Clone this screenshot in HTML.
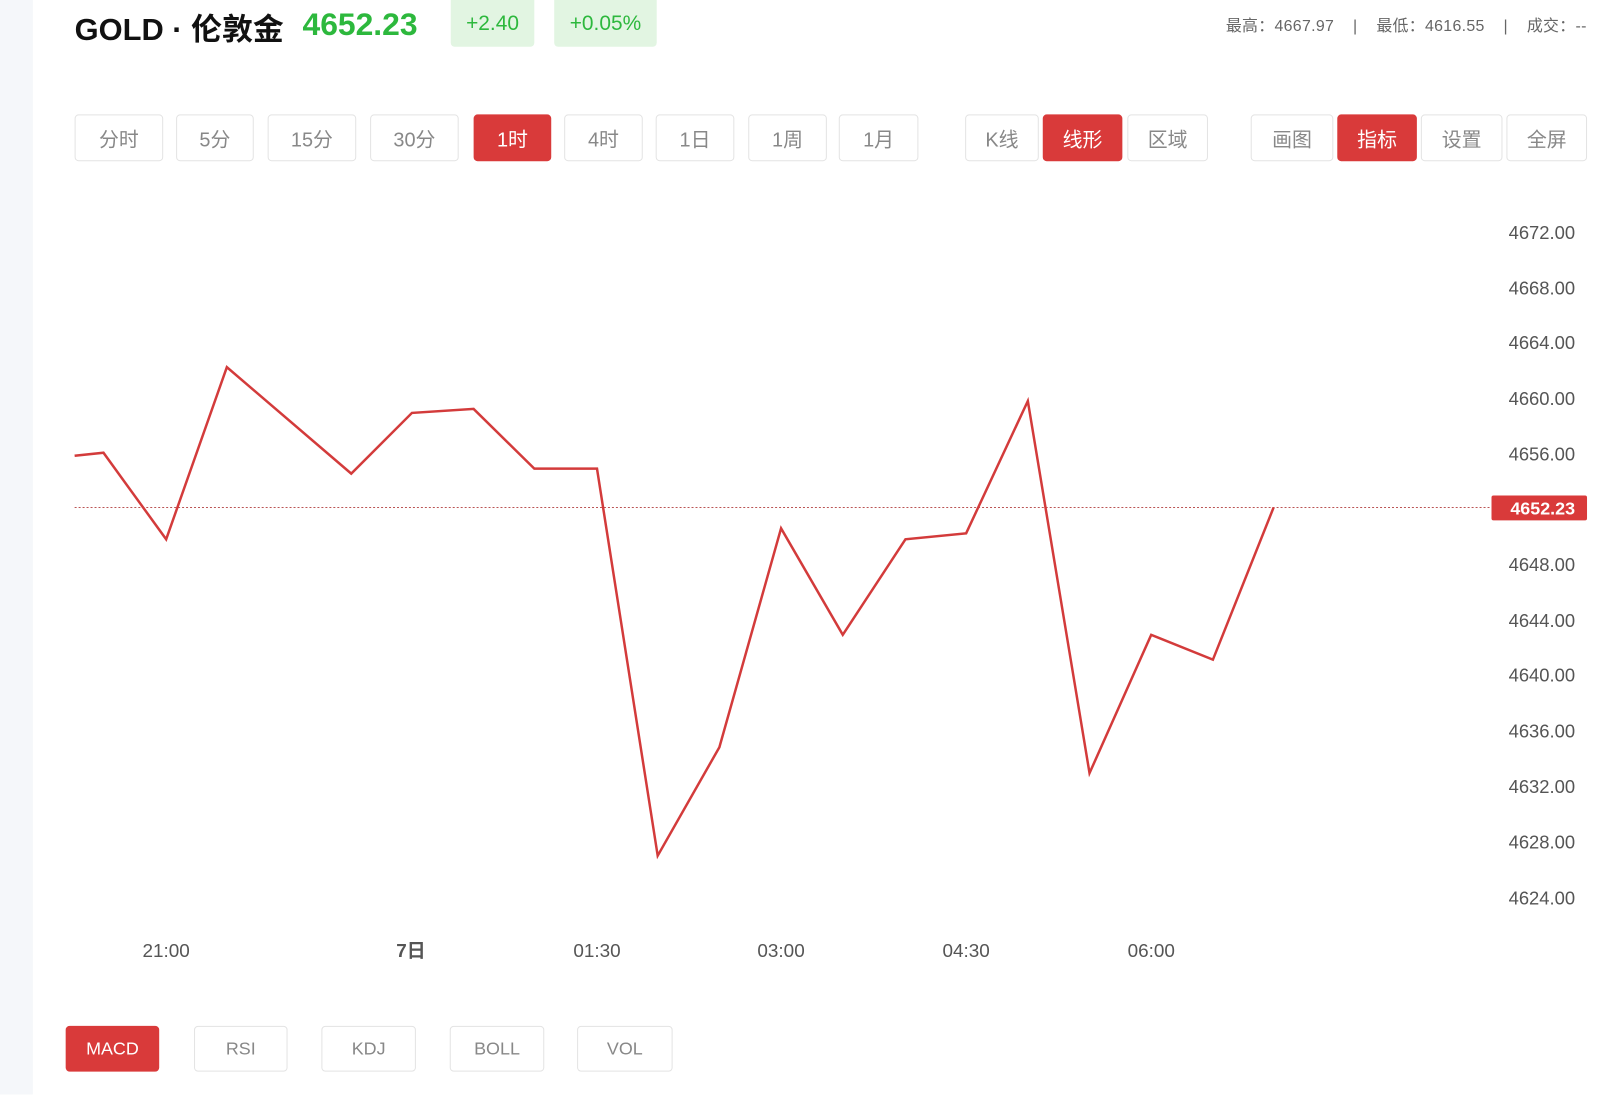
<!DOCTYPE html>
<html><head><meta charset="utf-8"><style>
*{margin:0;padding:0;box-sizing:border-box}
body{width:1624px;height:1092px;background:#fff;position:relative;overflow:hidden;font-family:"Liberation Sans","Noto Sans CJK SC",sans-serif}
#w{position:absolute;left:0;top:0;width:1624px;height:1092px;transform:scale(0.995);transform-origin:0 0}
.side{position:absolute;left:0;top:0;width:33px;height:1100px;background:#f5f7fa}
.t{position:absolute;white-space:nowrap}
.btn{position:absolute;border:1px solid #e3e3e3;border-radius:4px;color:#888;font-size:20px;display:flex;align-items:center;justify-content:center;background:#fff}
.b2{position:absolute;border:1px solid #e3e3e3;border-radius:4px;color:#888;font-size:18px;display:flex;align-items:center;justify-content:center;top:1031px;height:46px;background:#fff}
.btn.on,.b2.on{background:#d93a3a;border-color:#d93a3a;color:#fff}
.badge{position:absolute;top:0;height:47px;background:#e2f5e2;color:#2db83d;font-size:21px;display:flex;align-items:center;justify-content:center;border-radius:0 0 4px 4px}
</style></head><body><div id="w">
<div class="side"></div>
<div class="t" style="left:75px;top:4px;font-size:31px;font-weight:bold;color:#111">GOLD · 伦敦金</div>
<div class="t" style="left:304px;top:6px;font-size:32px;font-weight:bold;color:#2db83d">4652.23</div>
<div class="badge" style="left:453px;width:84px">+2.40</div>
<div class="badge" style="left:557px;width:103px">+0.05%</div>
<div class="t" style="left:1232px;top:12px;font-size:16px;color:#666;letter-spacing:0.3px">最高：4667.97&nbsp;&nbsp;&nbsp;&nbsp;|&nbsp;&nbsp;&nbsp;&nbsp;最低：4616.55&nbsp;&nbsp;&nbsp;&nbsp;|&nbsp;&nbsp;&nbsp;&nbsp;成交：--</div>

<div class="btn" style="left:75px;top:115px;width:89px;height:47px">分时</div>
<div class="btn" style="left:177px;top:115px;width:78px;height:47px">5分</div>
<div class="btn" style="left:269px;top:115px;width:89px;height:47px">15分</div>
<div class="btn" style="left:372px;top:115px;width:89px;height:47px">30分</div>
<div class="btn on" style="left:476px;top:115px;width:78px;height:47px">1时</div>
<div class="btn" style="left:567px;top:115px;width:79px;height:47px">4时</div>
<div class="btn" style="left:659px;top:115px;width:79px;height:47px">1日</div>
<div class="btn" style="left:752px;top:115px;width:79px;height:47px">1周</div>
<div class="btn" style="left:843px;top:115px;width:80px;height:47px">1月</div>
<div class="btn" style="left:970px;top:115px;width:74px;height:47px">K线</div>
<div class="btn on" style="left:1048px;top:115px;width:80px;height:47px">线形</div>
<div class="btn" style="left:1133px;top:115px;width:81px;height:47px">区域</div>
<div class="btn" style="left:1257px;top:115px;width:83px;height:47px">画图</div>
<div class="btn on" style="left:1344px;top:115px;width:80px;height:47px">指标</div>
<div class="btn" style="left:1428px;top:115px;width:82px;height:47px">设置</div>
<div class="btn" style="left:1514px;top:115px;width:81px;height:47px">全屏</div>

<svg style="position:absolute;left:0;top:0" width="1624" height="1092">
<g font-family="Liberation Sans, sans-serif" font-size="18.5" fill="#555" text-anchor="end">
<text x="1583" y="240">4672.00</text>
<text x="1583" y="296">4668.00</text>
<text x="1583" y="351">4664.00</text>
<text x="1583" y="407">4660.00</text>
<text x="1583" y="463">4656.00</text>
<text x="1583" y="574">4648.00</text>
<text x="1583" y="630">4644.00</text>
<text x="1583" y="685">4640.00</text>
<text x="1583" y="741">4636.00</text>
<text x="1583" y="797">4632.00</text>
<text x="1583" y="853">4628.00</text>
<text x="1583" y="909">4624.00</text>
</g>
<line x1="75" y1="510" x2="1499" y2="510" stroke="#b55" stroke-width="1" stroke-dasharray="2,2"/>
<rect x="1499" y="498" width="96" height="25" rx="2" fill="#d93a3a"/>
<text x="1583" y="517" font-family="Liberation Sans, sans-serif" font-size="18" font-weight="bold" fill="#fff" text-anchor="end">4652.23</text>
<polyline fill="none" stroke="#d33b3b" stroke-width="2.5" stroke-linejoin="miter" points="75,458 104,455 167,542 228,369 353,476 414,415 476,411 537,471 600,471 661,860 723,751 785,531 847,638 910,542 971,536 1033,403 1095,777 1157,638 1219,663 1280,510"/>
<g font-family="Liberation Sans, 'Noto Sans CJK SC', sans-serif" font-size="19" fill="#555" text-anchor="middle">
<text x="167" y="962">21:00</text>
<text x="413" y="962" font-weight="bold">7日</text>
<text x="600" y="962">01:30</text>
<text x="785" y="962">03:00</text>
<text x="971" y="962">04:30</text>
<text x="1157" y="962">06:00</text>
</g>
</svg>

<div class="b2 on" style="left:66px;width:94px">MACD</div>
<div class="b2" style="left:195px;width:94px">RSI</div>
<div class="b2" style="left:323px;width:95px">KDJ</div>
<div class="b2" style="left:452px;width:95px">BOLL</div>
<div class="b2" style="left:580px;width:96px">VOL</div>
</div></body></html>
